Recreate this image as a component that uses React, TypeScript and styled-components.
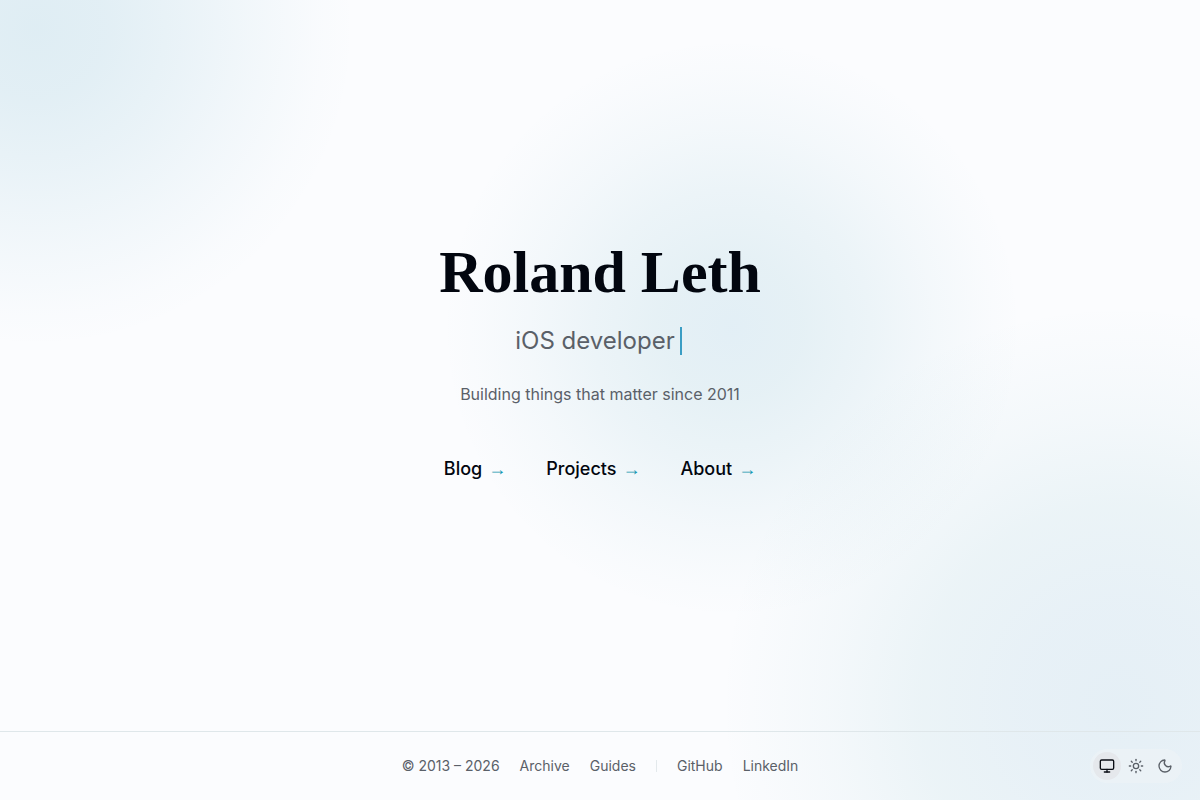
import React, { useState } from "react";
import styled, { createGlobalStyle } from "styled-components";
import { Monitor, Moon, Sun } from "lucide-react";

const GlobalStyle = createGlobalStyle`
  *, *::before, *::after { box-sizing: border-box; }
  body {
    margin: 0;
    background: #fbfcfe;
    color: #02060f;
    font-family: Inter, sans-serif;
  }
`;

const Page = styled.div`
  min-height: 100vh;
  display: flex;
  flex-direction: column;
  background:
    radial-gradient(circle 320px at 36px 28px, #278cb022 0%, #278cb01e 22%, #278cb015 45%, #278cb00b 68%, #278cb003 88%, #278cb000 100%),
    radial-gradient(circle 290px at 61% 41%, #2b8cb81e 0%, #278ca81a 24%, #278ca812 48%, #278ca809 70%, #278ca803 88%, #278ca800 100%),
    radial-gradient(circle 400px at calc(100% - 80px) calc(100% - 96px), #2b84b01b 0%, #2b84b018 25%, #278ca013 50%, #278ca009 72%, #278ca003 90%, #278ca000 100%),
    #fbfcfe;
`;

const Hero = styled.main`
  flex: 1;
  display: flex;
  flex-direction: column;
  align-items: center;
  justify-content: center;
  padding: 0 24px 14px;
  text-align: center;
`;

const Name = styled.h1`
  margin: 0 0 16px;
  font-family: "Liberation Serif", serif;
  font-size: 60px;
  line-height: 72px;
  font-weight: 700;
`;

const Role = styled.p`
  display: flex;
  align-items: center;
  gap: 5px;
  margin: 0 0 24px;
  font-size: 24px;
  line-height: 34px;
  color: #5a6068;
`;

const Caret = styled.span`
  width: 2px;
  height: 28px;
  margin-right: 3px;
  background: #3a9dc4;
`;

const Tagline = styled.p`
  margin: 0 0 50px;
  font-size: 16px;
  line-height: 24px;
  color: #5a6068;
`;

const MainNav = styled.nav`
  display: flex;
  gap: 40px;
`;

const MainLink = styled.a`
  display: flex;
  align-items: center;
  gap: 6px;
  font-size: 18px;
  line-height: 26px;
  font-weight: 500;
  color: inherit;
  text-decoration: none;
`;

const Arrow = styled.span`
  font-family: "Liberation Sans", sans-serif;
  color: #1496b0;
`;

const Footer = styled.footer`
  display: flex;
  justify-content: center;
  align-items: center;
  gap: 20px;
  padding: 24px;
  border-top: 1px solid #dfe7ea;
  font-size: 14px;
  line-height: 20px;
  color: #5a6068;
`;

const FooterLink = styled.a`
  color: inherit;
  text-decoration: none;
`;

const Divider = styled.span`
  width: 1px;
  height: 12px;
  background: #e3e9ec;
`;

const ThemeSwitch = styled.div`
  position: fixed;
  right: 18px;
  bottom: 17px;
  display: flex;
  gap: 1px;
  padding: 3px;
  border-radius: 17px;
  background: #f3f6f866;
`;

const ThemeButton = styled.button<{ $active: boolean }>`
  display: grid;
  place-items: center;
  width: 28px;
  height: 28px;
  padding: 0;
  border: 0;
  border-radius: 50%;
  background: ${(p) => (p.$active ? "#e5e8ec" : "transparent")};
  color: ${(p) => (p.$active ? "#0a0d14" : "#5a6068")};
  cursor: pointer;
`;

const pages = ["Blog", "Projects", "About"];
const themes = [
  { name: "System", Icon: Monitor },
  { name: "Light", Icon: Sun },
  { name: "Dark", Icon: Moon },
];

export default function App() {
  const [theme, setTheme] = useState("System");
  return (
    <>
      <GlobalStyle />
      <Page>
        <Hero>
          <Name>Roland Leth</Name>
          <Role>iOS developer <Caret /></Role>
          <Tagline>Building things that matter since 2011</Tagline>
          <MainNav>
            {pages.map((page) => (
              <MainLink key={page} href={"#" + page.toLowerCase()}>
                {page} <Arrow>→</Arrow>
              </MainLink>
            ))}
          </MainNav>
        </Hero>
        <Footer>
          <span>© 2013 – 2026</span>
          <FooterLink href="#archive">Archive</FooterLink>
          <FooterLink href="#guides">Guides</FooterLink>
          <Divider />
          <FooterLink href="#github">GitHub</FooterLink>
          <FooterLink href="#linkedin">LinkedIn</FooterLink>
        </Footer>
        <ThemeSwitch>
          {themes.map(({ name, Icon }) => (
            <ThemeButton
              key={name}
              type="button"
              aria-label={name + " theme"}
              $active={theme === name}
              onClick={() => setTheme(name)}
            >
              <Icon size={16} strokeWidth={2} />
            </ThemeButton>
          ))}
        </ThemeSwitch>
      </Page>
    </>
  );
}
